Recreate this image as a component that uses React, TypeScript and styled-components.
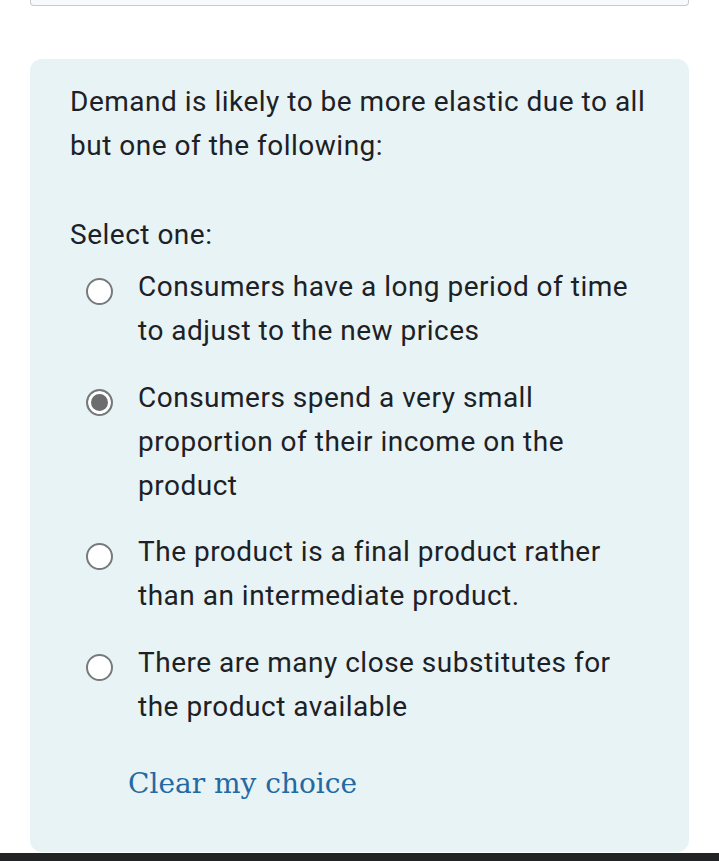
import React, { useState } from "react";
import styled, { createGlobalStyle } from "styled-components";

const GlobalStyle = createGlobalStyle`
  html, body {
    margin: 0;
    padding: 0;
    background: #ffffff;
  }
  body {
    font-family: Roboto, "Noto Sans", Arial, sans-serif;
    color: #1d2125;
  }
`;

const options = [
  "Consumers have a long period of time to adjust to the new prices",
  "Consumers spend a very small proportion of their income on the product",
  "The product is a final product rather than an intermediate product.",
  "There are many close substitutes for the product available",
];

const App: React.FC = () => {
  const [selected, setSelected] = useState<number | null>(1);

  return (
    <Page>
      <GlobalStyle />
      <TopField />
      <QuestionCard>
        <QuestionText>
          Demand is likely to be more elastic due to all but one of the
          following:
        </QuestionText>
        <Prompt>Select one:</Prompt>
        <AnswerList>
          {options.map((text, index) => (
            <AnswerRow key={index} onClick={() => setSelected(index)}>
              <Radio checked={selected === index} />
              <AnswerLabel>{text}</AnswerLabel>
            </AnswerRow>
          ))}
        </AnswerList>
        <ClearLink onClick={() => setSelected(null)}>Clear my choice</ClearLink>
      </QuestionCard>
      <BottomBar />
    </Page>
  );
};

export default App;

const Page = styled.div`
  width: 719px;
  height: 861px;
  display: flex;
  flex-direction: column;
  overflow: hidden;
`;

const TopField = styled.div`
  margin: 0 30px;
  height: 5px;
  border: 1px solid #c6cbd1;
  border-top: none;
  border-radius: 0 0 4px 4px;
  background: #f7fafc;
`;

const QuestionCard = styled.div`
  margin: 53px 30px 0;
  height: 793px;
  box-sizing: border-box;
  background: #e7f3f5;
  border-radius: 12px;
  padding: 21px 40px 0;
  display: flex;
  flex-direction: column;
`;

const BodyText = styled.div`
  font-size: 28px;
  line-height: 44px;
  letter-spacing: 0.5px;
`;

const QuestionText = styled(BodyText)``;

const Prompt = styled(BodyText)`
  margin-top: 45px;
`;

const AnswerList = styled.div`
  margin-top: 8px;
  display: flex;
  flex-direction: column;
  gap: 22.5px;
`;

const AnswerRow = styled.div`
  display: flex;
  align-items: flex-start;
  padding-left: 16px;
  cursor: pointer;
`;

const Radio = styled.span<{ checked: boolean }>`
  flex: 0 0 auto;
  width: 27px;
  height: 27px;
  box-sizing: border-box;
  margin-top: 13px;
  margin-right: 25px;
  border-radius: 50%;
  border: 2px solid #777a7c;
  background: ${(p) => (p.checked ? "#6b6d6f" : "#ffffff")};
  box-shadow: ${(p) => (p.checked ? "inset 0 0 0 3px #ffffff" : "none")};
`;

const AnswerLabel = styled(BodyText)`
  flex: 1;
`;

const ClearLink = styled.a`
  margin-top: 33px;
  margin-left: 58px;
  font-family: "DejaVu Serif", "Liberation Serif", serif;
  font-size: 28px;
  line-height: 44px;
  color: #2369a3;
  cursor: pointer;
`;

const BottomBar = styled.div`
  margin-top: auto;
  height: 8px;
  background: #222324;
`;
